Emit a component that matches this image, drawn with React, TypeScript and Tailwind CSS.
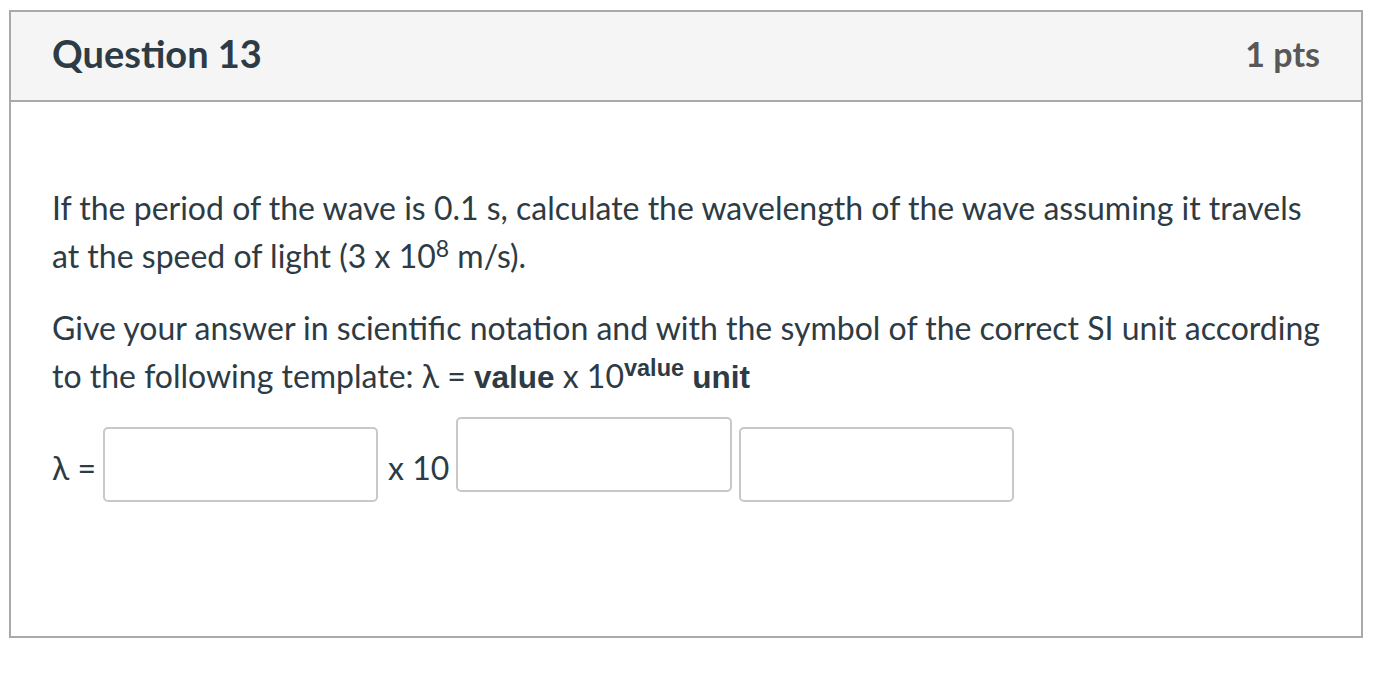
export default function App() {
  return (
    <div className="min-h-screen bg-white pt-[10px] pl-[9px] pr-[16px] font-['Lato',sans-serif] text-[#2d3b45]">
      <div className="border-2 border-[#a9a9a9] w-[1354px]">
        <div className="flex items-center justify-between h-[90px] pb-[6px] bg-[#f5f5f5] border-b-2 border-[#a9a9a9] px-[41px]">
          <h2 className="text-[38px] font-bold">Question 13</h2>
          <span className="text-[34px] font-bold text-[#585858]">1 pts</span>
        </div>

        <div className="pl-[41px] pr-[30px] pt-[82px] pb-[134px] text-[32px] leading-[48px]">
          <p>
            If the period of the wave is 0.1 s, calculate the wavelength of the wave assuming it travels at the speed of
            light (3 x 10<sup className="text-[23px] leading-none">8</sup> m/s).
          </p>
          <p className="mt-[24px]">
            Give your answer in scientific notation and with the symbol of the correct SI unit according to the
            following template: λ ={" "}
            <strong className="font-['Liberation_Sans',sans-serif] text-[31.5px]">value</strong> x 10
            <sup className="font-['Liberation_Sans',sans-serif] font-bold text-[23.5px] leading-none">value</sup>{" "}
            <strong className="font-['Liberation_Sans',sans-serif] text-[31.5px]">unit</strong>
          </p>

          <div className="flex items-center mt-[16px]">
            <span className="mr-[7px] mt-[16px]">λ =</span>
            <input className="w-[275px] h-[75px] border-2 border-[#c8c8c8] rounded-[5px] mt-[10px]" />
            <span className="ml-[10px] mr-[7px] mt-[16px]">x 10</span>
            <input className="w-[276px] h-[75px] border-2 border-[#c8c8c8] rounded-[5px] mb-[10px]" />
            <input className="w-[275px] h-[75px] border-2 border-[#c8c8c8] rounded-[5px] ml-[7px] mt-[10px]" />
          </div>
        </div>
      </div>
    </div>
  );
}
